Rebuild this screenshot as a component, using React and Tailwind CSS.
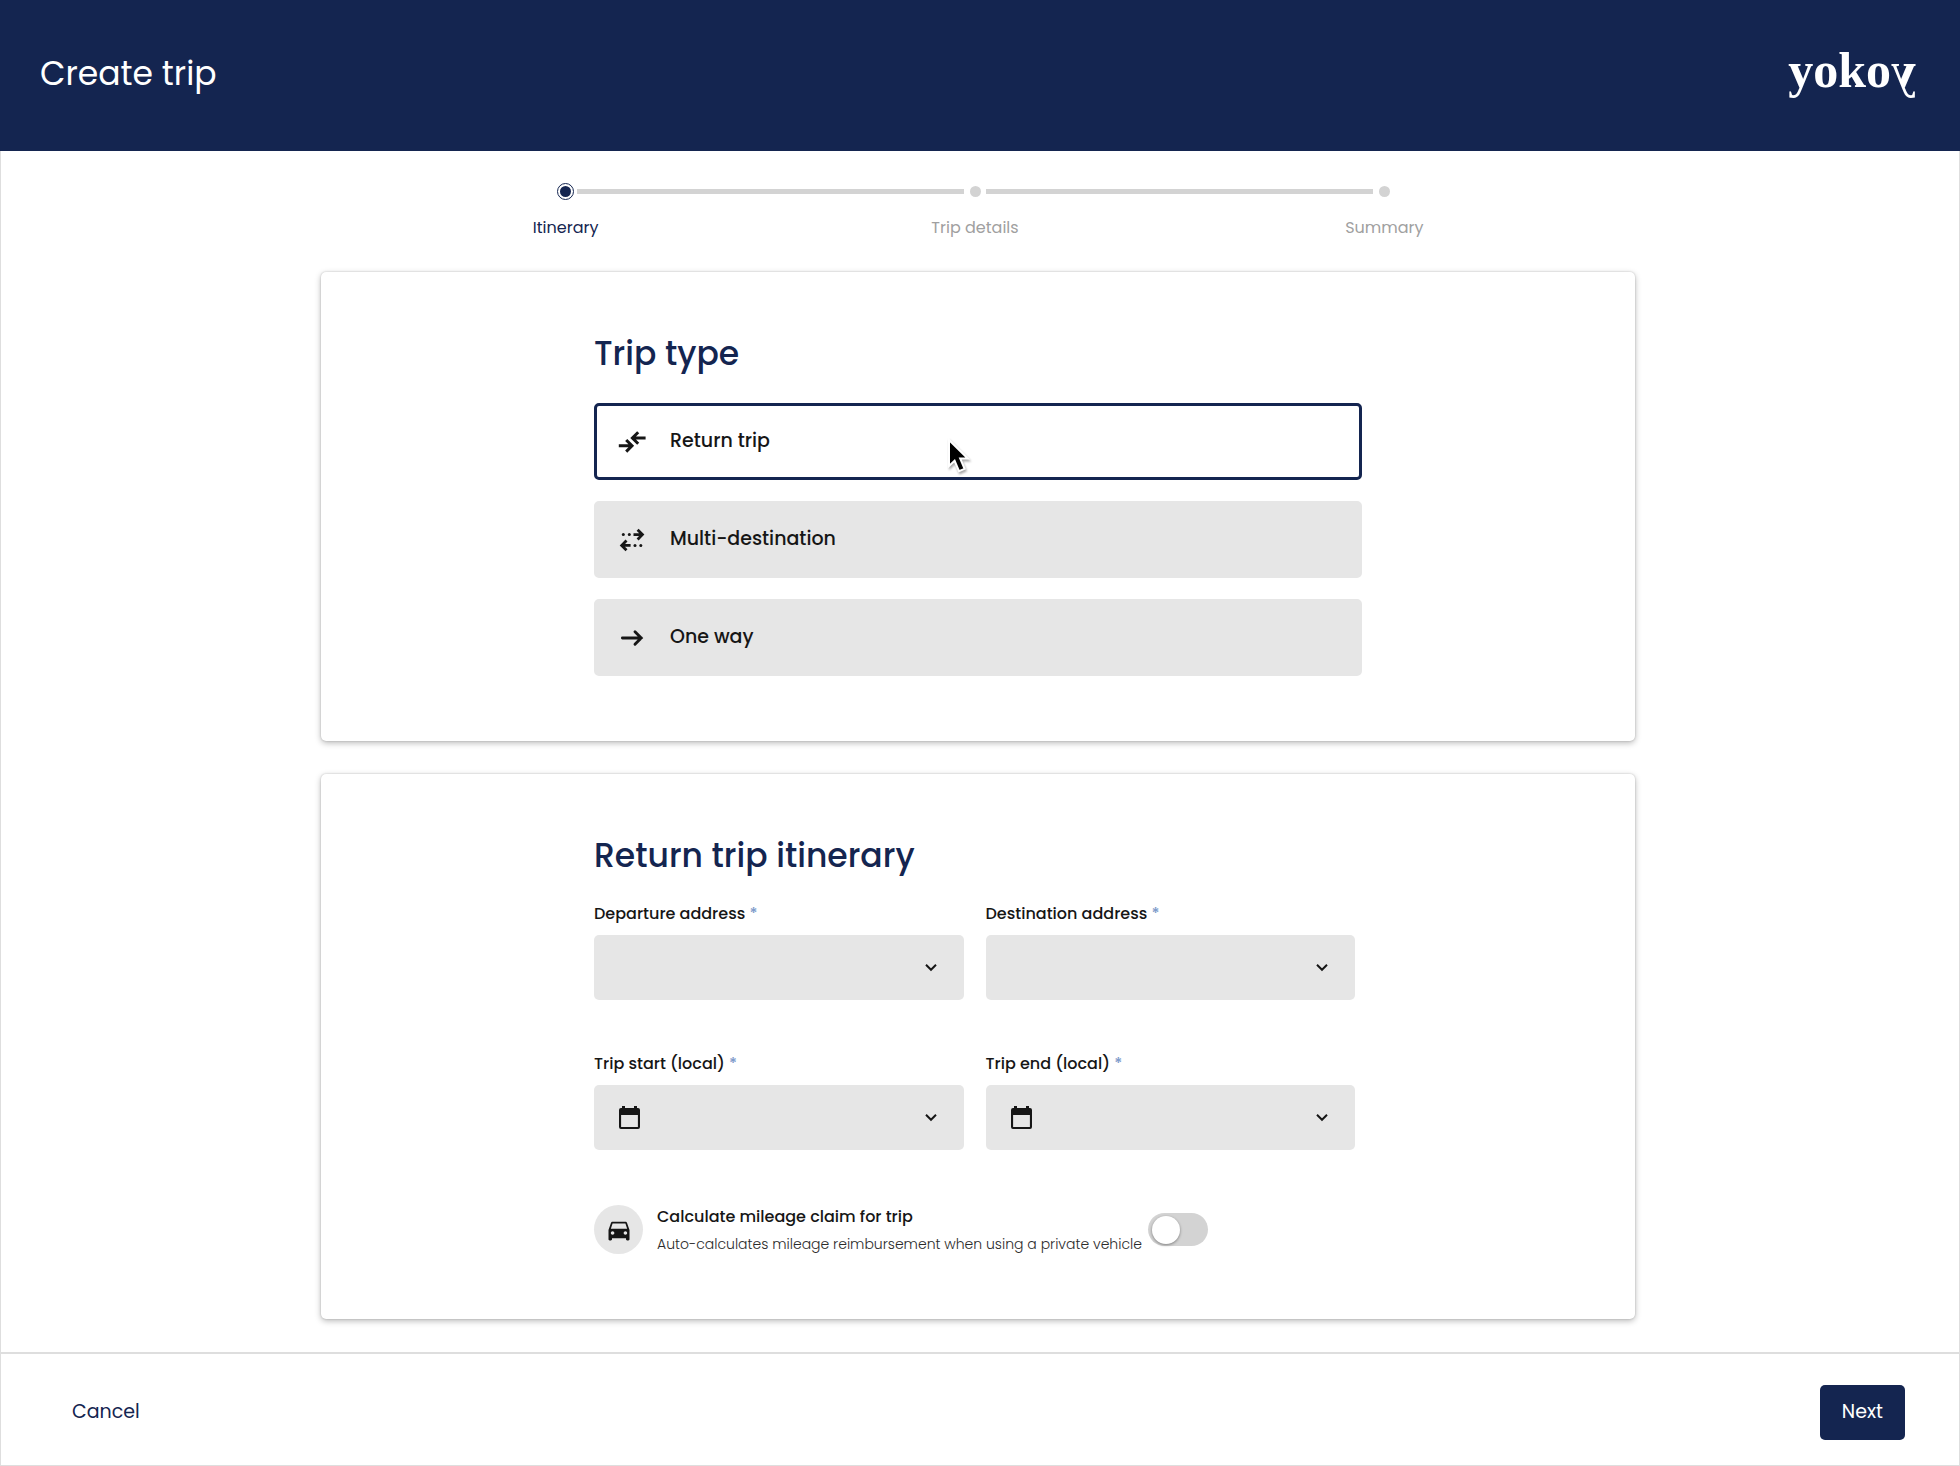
import { useState } from "react";
import { MdDirectionsCar } from "react-icons/md";

function ReturnIcon() {
  return (
    <svg width="28" height="24" viewBox="0 0 28 24" fill="none" stroke="currentColor" strokeWidth="3" aria-hidden="true">
      <path d="M.8 15.8H14M8.2 10L14 15.8L8.2 21.6" />
      <path d="M27.6 8H14.6M20.2 2.2L14.4 8L20.2 13.8" />
    </svg>
  );
}

function MultiIcon() {
  return (
    <svg width="28" height="24" viewBox="0 0 28 24" fill="none" stroke="currentColor" strokeWidth="2.8" aria-hidden="true">
      <path d="M15.5 6.6H24.4M19.6 1.8L24.4 6.6L19.6 11.4" />
      <path d="M12.6 17.4H3.7M8.5 12.6L3.7 17.4L8.5 22.2" />
      <g fill="currentColor" stroke="none">
        <circle cx="5.3" cy="6.6" r="1.5" />
        <circle cx="11.3" cy="6.6" r="1.5" />
        <circle cx="17" cy="17.4" r="1.5" />
        <circle cx="22.8" cy="17.4" r="1.5" />
      </g>
    </svg>
  );
}

function OneWayIcon() {
  return (
    <svg width="28" height="24" viewBox="0 0 28 24" fill="none" stroke="currentColor" strokeWidth="2.9" strokeLinecap="round" aria-hidden="true">
      <path d="M4.4 12H23.2M17 5.8L23.2 12L17 18.2" />
    </svg>
  );
}

function CalendarIcon() {
  return (
    <svg width="21" height="23" viewBox="0 0 21 23" fill="currentColor" aria-hidden="true">
      <path
        fillRule="evenodd"
        d="M3 0H6V2H15V0H18V2H19A2 2 0 0 1 21 4V21A2 2 0 0 1 19 23H2A2 2 0 0 1 0 21V4A2 2 0 0 1 2 2H3ZM2.1 9V20.9H18.9V9Z"
      />
    </svg>
  );
}

function Chevron() {
  return (
    <svg width="12" height="8" viewBox="0 0 12 8" fill="none" stroke="currentColor" strokeWidth="2" aria-hidden="true">
      <path d="M1 .8L6 5.8L11 .8" />
    </svg>
  );
}

function Pointer() {
  return (
    <svg className="pointer-events-none absolute top-[30px] left-[348px] drop-shadow-[1px_2px_1px_rgba(0,0,0,0.35)]" width="28" height="40" viewBox="0 0 28 40" aria-hidden="true">
      <path d="M4 4V30L9.6 24.8L14 35.2L19.6 32.8L15.2 22.6H22.8Z" fill="#000" stroke="#fff" strokeWidth="2" />
    </svg>
  );
}

const tripTypes = [
  { id: "return", label: "Return trip", Icon: ReturnIcon },
  { id: "multi", label: "Multi-destination", Icon: MultiIcon },
  { id: "oneway", label: "One way", Icon: OneWayIcon },
];

const fields = [
  { id: "departure", label: "Departure address" },
  { id: "destination", label: "Destination address" },
  { id: "start", label: "Trip start (local)", date: true },
  { id: "end", label: "Trip end (local)", date: true },
];

const steps = ["Itinerary", "Trip details", "Summary"];

function Stepper() {
  return (
    <ol className="grid grid-cols-3 pr-[46px] pl-10">
      {steps.map((step, i) => (
        <li key={step} className={i === 0 ? "text-[#142550]" : "text-[#a0a0a0]"}>
          <div className="flex h-[18px] items-center">
            <span className={i === 0 ? "flex-1" : "h-[5px] flex-1 bg-[#d3d3d3]"} />
            <span className="flex w-[22px] justify-center">
              {i === 0 ? (
                <span className="flex size-[17px] items-center justify-center rounded-full border border-[#142550]">
                  <span className="size-[11px] rounded-full bg-[#142550]" />
                </span>
              ) : (
                <span className="size-[11px] rounded-full bg-[#d3d3d3]" />
              )}
            </span>
            <span className={i === 2 ? "flex-1" : "h-[5px] flex-1 bg-[#d3d3d3]"} />
          </div>
          <p className="mt-4 text-center text-base leading-6">{step}</p>
        </li>
      ))}
    </ol>
  );
}

function Card({ title, children }) {
  return (
    <section className="rounded-[5px] bg-white px-6 pt-[62px] pb-[65px] shadow-[0_2px_6px_rgba(0,0,0,0.28),0_0_2px_rgba(0,0,0,0.2)]">
      <div className="mx-auto max-w-3xl">
        <h2 className="text-[33px] leading-10 font-medium text-[#142550]">{title}</h2>
        {children}
      </div>
    </section>
  );
}

export default function App() {
  const [type, setType] = useState("return");

  return (
    <div className="flex min-h-screen flex-col bg-white font-[Poppins,Inter,sans-serif] text-[#161616]">
      <header className="flex h-[151px] items-center justify-between bg-[#142550] pr-11 pb-[3px] pl-10 text-white">
        <h1 className="text-[33px] leading-10">Create trip</h1>
        <div className="pb-2 font-['Liberation_Serif',serif] text-[50px] leading-14 font-bold">
          yoko<span className="inline-block -scale-x-100">y</span>
        </div>
      </header>

      <main className="flex-1 border-x border-[#dedede] pt-[31px] pr-1 pb-8">
        <div className="mx-auto max-w-[1314px]">
          <Stepper />
          <div className="mt-8 flex flex-col gap-[33px]">
            <Card title="Trip type">
              <div className="mt-[29px] flex flex-col gap-[21px]">
                {tripTypes.map(({ id, label, Icon }) => (
                  <button
                    key={id}
                    type="button"
                    aria-pressed={type === id}
                    onClick={() => setType(id)}
                    className={
                      type === id
                        ? "relative flex h-[77px] items-center gap-6 rounded-[5px] border-3 border-[#142550] bg-white px-[21px] text-[19px] font-medium"
                        : "relative flex h-[77px] items-center gap-6 rounded-[5px] border-3 border-[#e6e6e6] bg-[#e6e6e6] px-[21px] text-[19px] font-medium"
                    }
                  >
                    <Icon />
                    {label}
                    {id === "return" && <Pointer />}
                  </button>
                ))}
              </div>
            </Card>

            <Card title="Return trip itinerary">
              <div className="mt-[26px] grid max-w-[761px] grid-cols-2 gap-x-[22px] gap-y-[52px]">
                {fields.map(({ id, label, date }) => (
                  <div key={id}>
                    <label htmlFor={id} className="block text-base leading-6 font-medium">
                      {label} <span className="text-[#7f9ccb]">*</span>
                    </label>
                    <div className="relative mt-[9px]">
                      <select id={id} required className="block h-[65px] w-full appearance-none rounded-[5px] bg-[#e6e6e6] px-16 text-base">
                        <option value=""></option>
                      </select>
                      <span className="pointer-events-none absolute inset-0 flex items-center justify-between pr-[27px] pl-[25px]">
                        <span>{date && <CalendarIcon />}</span>
                        <Chevron />
                      </span>
                    </div>
                  </div>
                ))}
              </div>

              <div className="mt-[55px] flex items-center gap-1.5">
                <label htmlFor="mileage" className="flex items-center gap-[14px]">
                  <span className="flex size-[49px] items-center justify-center rounded-full bg-[#e6e6e6]">
                    <MdDirectionsCar size={28} />
                  </span>
                  <span>
                    <span className="block text-base leading-6 font-medium">Calculate mileage claim for trip</span>
                    <span className="mt-[5px] block text-sm leading-5 font-light text-[#2c2c2c]">
                      Auto-calculates mileage reimbursement when using a private vehicle
                    </span>
                  </span>
                </label>
                <input
                  id="mileage"
                  type="checkbox"
                  role="switch"
                  className="flex h-[33px] w-[60px] appearance-none items-center rounded-full bg-[#d3d3d3] px-1 before:size-7 before:rounded-full before:bg-white before:shadow-[0_1px_3px_rgba(0,0,0,0.4)] checked:justify-end checked:bg-[#142550]"
                />
              </div>
            </Card>
          </div>
        </div>
      </main>

      <footer className="flex items-start justify-between border-x border-t-2 border-b border-[#dedede] pt-[31px] pr-[54px] pb-[25px] pl-[55px]">
        <button type="button" className="h-[55px] px-4 text-[19px] text-[#142550]">Cancel</button>
        <button type="button" className="h-[55px] rounded-[5px] bg-[#142550] px-[22px] text-[19px] text-white">Next</button>
      </footer>
    </div>
  );
}
